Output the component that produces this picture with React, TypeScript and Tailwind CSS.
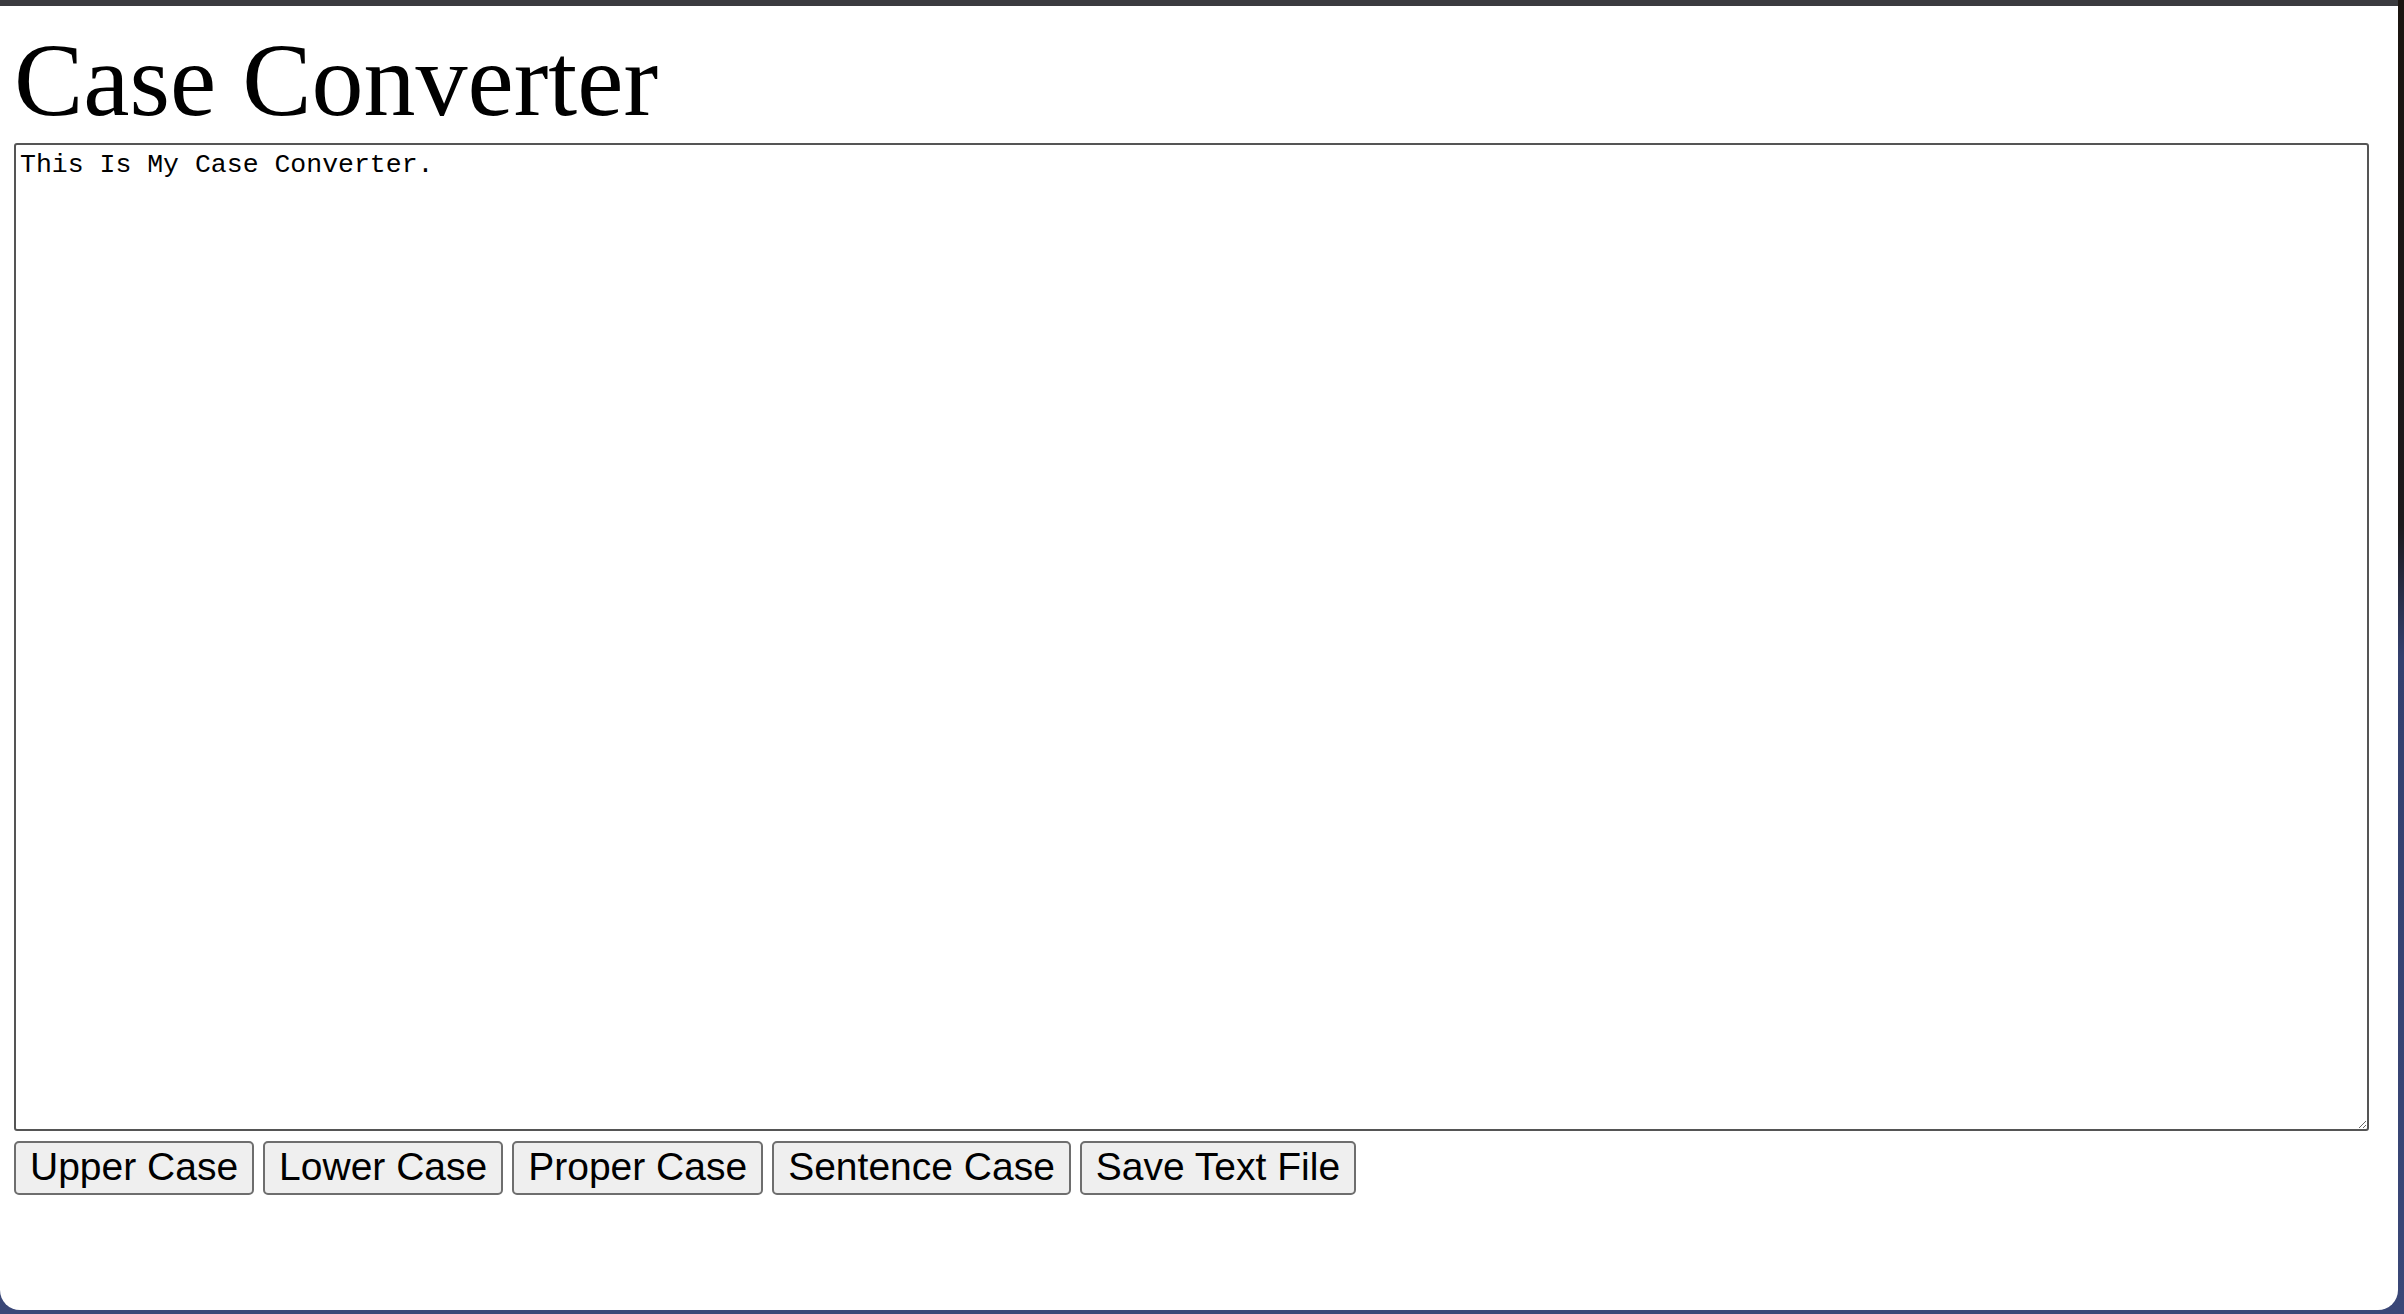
import React, { useState } from 'react';

const buttons = ['Upper Case', 'Lower Case', 'Proper Case', 'Sentence Case', 'Save Text File'];

const App: React.FC = () => {
    const [text, setText] = useState('This Is My Case Converter.');

    return (
        <div className="w-[2404px] h-[1314px] overflow-hidden bg-[linear-gradient(180deg,#1b1510_0%,#1d1a1c_40%,#34406e_50%,#3a4777_100%)]">
            <div className="w-[2398px] h-[1310px] bg-white border-t-[6px] border-[#3b3b3f] rounded-b-[20px] overflow-hidden pl-[14px] pt-[22px]">
                <h1 className="font-['Liberation_Serif',serif] text-[104px] leading-none text-black">Case Converter</h1>
                <textarea
                    value={text}
                    onChange={(e) => setText(e.target.value)}
                    className="mt-[11px] block w-[2355px] h-[988px] border-2 border-[#555] rounded-[3px] p-[4px] pt-[5px] font-['Liberation_Mono',monospace] text-[26.5px] leading-[1.15] text-black outline-none resize"
                />
                <div className="flex gap-[9px] mt-[10px]">
                    {buttons.map(b => (
                        <button
                            key={b}
                            className="h-[54px] px-[14px] pb-[4px] bg-[#efefef] border-2 border-[#6e6e6e] rounded-[5px] font-['Liberation_Sans',Arial,sans-serif] text-[39px] leading-none text-black"
                        >
                            {b}
                        </button>
                    ))}
                </div>
            </div>
        </div>
    );
};

export default App;
